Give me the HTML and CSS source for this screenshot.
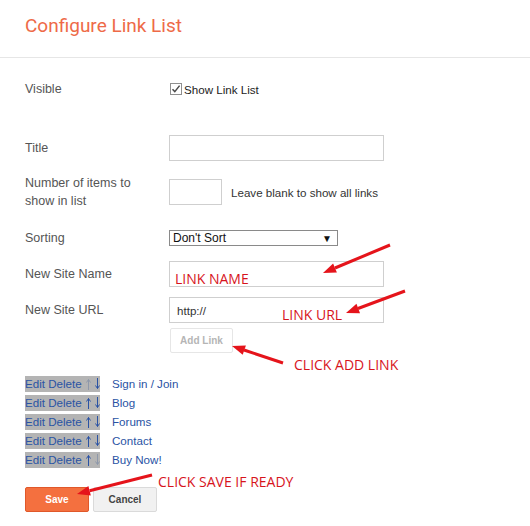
FILE: index.html
```html
<!DOCTYPE html>
<html>
<head>
<meta charset="utf-8">
<link rel="stylesheet" href="styles.css">
</head>
<body>
<header class="head"><h1>Configure Link List</h1></header>
<main class="form">
  <div class="row row-visible">
    <span class="label">Visible</span>
    <span class="check">
      <svg class="box" width="12" height="12" viewBox="0 0 12 12"><rect x="0.5" y="0.5" width="11" height="11" fill="#fff" stroke="#8f8f8f"/><path d="M2.5 6.2 L4.8 8.6 L9.6 2.6" fill="none" stroke="#4a4a4a" stroke-width="1.5"/></svg>
      <span class="check-text">Show Link List</span>
    </span>
  </div>
  <div class="row row-title">
    <span class="label">Title</span>
    <span class="input wide"></span>
  </div>
  <div class="row row-number">
    <span class="label">Number of items to<br>show in list</span>
    <span class="inline">
      <span class="input small"></span>
      <span class="hint">Leave blank to show all links</span>
    </span>
  </div>
  <div class="row row-sort">
    <span class="label">Sorting</span>
    <span class="select"><span>Don't Sort</span><span class="caret">▼</span></span>
  </div>
  <div class="row row-name">
    <span class="label">New Site Name</span>
    <span class="input wide"></span>
  </div>
  <div class="row row-url">
    <span class="label">New Site URL</span>
    <span class="input wide url">http://</span>
  </div>
  <div class="row row-add">
    <span></span>
    <span class="add-btn">Add Link</span>
  </div>
  <ul class="links">
    <li><span class="ops">Edit Delete<svg class="arr dim" width="5" height="12" viewBox="0 0 5 12"><path d="M2.5 12V1.5M0.5 4.5L2.5 1.5L4.5 4.5"/></svg><svg class="arr" width="5" height="12" viewBox="0 0 5 12"><path d="M2.5 0V10.5M0.5 7.5L2.5 10.5L4.5 7.5"/></svg></span><a>Sign in / Join</a></li>
    <li><span class="ops">Edit Delete<svg class="arr" width="5" height="12" viewBox="0 0 5 12"><path d="M2.5 12V1.5M0.5 4.5L2.5 1.5L4.5 4.5"/></svg><svg class="arr" width="5" height="12" viewBox="0 0 5 12"><path d="M2.5 0V10.5M0.5 7.5L2.5 10.5L4.5 7.5"/></svg></span><a>Blog</a></li>
    <li><span class="ops">Edit Delete<svg class="arr" width="5" height="12" viewBox="0 0 5 12"><path d="M2.5 12V1.5M0.5 4.5L2.5 1.5L4.5 4.5"/></svg><svg class="arr" width="5" height="12" viewBox="0 0 5 12"><path d="M2.5 0V10.5M0.5 7.5L2.5 10.5L4.5 7.5"/></svg></span><a>Forums</a></li>
    <li><span class="ops">Edit Delete<svg class="arr" width="5" height="12" viewBox="0 0 5 12"><path d="M2.5 12V1.5M0.5 4.5L2.5 1.5L4.5 4.5"/></svg><svg class="arr" width="5" height="12" viewBox="0 0 5 12"><path d="M2.5 0V10.5M0.5 7.5L2.5 10.5L4.5 7.5"/></svg></span><a>Contact</a></li>
    <li><span class="ops">Edit Delete<svg class="arr" width="5" height="12" viewBox="0 0 5 12"><path d="M2.5 12V1.5M0.5 4.5L2.5 1.5L4.5 4.5"/></svg><svg class="arr dim" width="5" height="12" viewBox="0 0 5 12"><path d="M2.5 0V10.5M0.5 7.5L2.5 10.5L4.5 7.5"/></svg></span><a>Buy Now!</a></li>
  </ul>
  <div class="actions">
    <span class="btn save">Save</span>
    <span class="btn cancel">Cancel</span>
  </div>
</main>
<svg class="notes" width="530" height="526" viewBox="0 0 530 526">
  <g class="note-text">
    <text x="175" y="284">LINK NAME</text>
    <text x="282" y="320">LINK URL</text>
    <text x="294" y="370">CLICK ADD LINK</text>
    <text x="158" y="487">CLICK SAVE IF READY</text>
  </g>
  <g class="arrows">
    <line x1="390" y1="245" x2="335" y2="268"/>
    <polygon points="323,273 336.9,272.6 333.1,263.4"/>
    <line x1="405" y1="291" x2="358" y2="308.5"/>
    <polygon points="346,313 360,313.2 356.5,303.8"/>
    <line x1="283" y1="363" x2="244" y2="350"/>
    <polygon points="232,346 245.9,345.4 242.7,354.8"/>
    <line x1="152" y1="475" x2="89.6" y2="490.8"/>
    <polygon points="77,494 88.4,486 90.8,495.6"/>
  </g>
</svg>
</body>
</html>
```
FILE: styles.css
```css
html, body {
  margin: 0;
  padding: 0;
  background: #fff;
}
body {
  position: relative;
  width: 530px;
  height: 526px;
  overflow: hidden;
  font-family: "Liberation Sans", Arial, sans-serif;
  font-size: 11.6px;
  color: #555;
}
.head {
  box-sizing: border-box;
  height: 58px;
  padding: 12px 0 0 25px;
  border-bottom: 1px solid #e6e6e6;
}
.head h1 {
  margin: 0;
  font-family: Roboto, sans-serif;
  font-weight: 400;
  font-size: 19px;
  line-height: 27px;
  color: #ee6a48;
}
.form {
  padding-left: 25px;
}
.row {
  display: grid;
  grid-template-columns: 144px auto;
  align-items: center;
  min-height: 26px;
}
.label {
  font-size: 12.5px;
  line-height: 18px;
  color: #555;
}
.row-visible { margin-top: 18px; }
.row-title { margin-top: 33px; }
.row-number { margin-top: 13px; }
.row-sort { margin-top: 15px; }
.row-name { margin-top: 10px; }
.row-url { margin-top: 10px; }
.row-add { margin-top: 5px; min-height: 25px; }
.check {
  display: flex;
  align-items: center;
  gap: 2px;
  padding-left: 1px;
}
.box { display: block; }
.check-text { color: #222; }
.input {
  box-sizing: border-box;
  display: block;
  height: 26px;
  border: 1px solid #cfcfcf;
  background: #fff;
}
.wide { width: 215px; }
.small { width: 53px; }
.url {
  display: flex;
  align-items: center;
  padding-left: 7px;
  color: #333;
}
.inline {
  display: flex;
  align-items: center;
  gap: 9px;
}
.hint { color: #333; }
.select {
  box-sizing: border-box;
  width: 169px;
  height: 16px;
  border: 1px solid #8a8a8a;
  display: flex;
  align-items: center;
  justify-content: space-between;
  padding: 0 5px 0 3px;
  font-size: 12px;
  color: #111;
}
.caret { font-size: 10px; }
.add-btn {
  box-sizing: border-box;
  justify-self: start;
  margin-left: 1px;
  width: 63px;
  height: 25px;
  border: 1px solid #e6e6e6;
  border-radius: 2px;
  display: flex;
  align-items: center;
  justify-content: center;
  font-size: 10px;
  font-weight: 700;
  color: #b5b5b5;
  background: #fff;
}
.links {
  list-style: none;
  margin: 21px 0 0;
  padding: 0;
}
.links li {
  display: flex;
  align-items: center;
  height: 19px;
  gap: 12px;
}
.ops {
  display: inline-flex;
  align-items: center;
  box-sizing: border-box;
  width: 75px;
  height: 16px;
  line-height: 16px;
  background: #b4b4b4;
  color: #2a53a4;
  white-space: nowrap;
}
.arr {
  display: block;
  margin-left: 4px;
  fill: none;
  stroke: #2a53a4;
  stroke-width: 1;
}
.arr.dim { stroke: #8e98aa; }
.links a {
  color: #2a53a4;
}
.actions {
  display: flex;
  gap: 4px;
  margin-top: 18px;
}
.btn {
  box-sizing: border-box;
  width: 64px;
  height: 25px;
  border-radius: 2px;
  display: flex;
  align-items: center;
  justify-content: center;
  font-size: 10px;
  font-weight: 700;
}
.save {
  background: #f4703f;
  border: 1px solid #e0582a;
  color: #fff;
}
.cancel {
  background: #f1f1f1;
  border: 1px solid #dadada;
  color: #444;
}
.notes {
  position: absolute;
  left: 0;
  top: 0;
  pointer-events: none;
}
.note-text text {
  font-family: "Open Sans", sans-serif;
  font-size: 14px;
  fill: #d7141c;
}
.arrows line {
  stroke: #e5141b;
  stroke-width: 3;
}
.arrows polygon {
  fill: #e5141b;
}
```
